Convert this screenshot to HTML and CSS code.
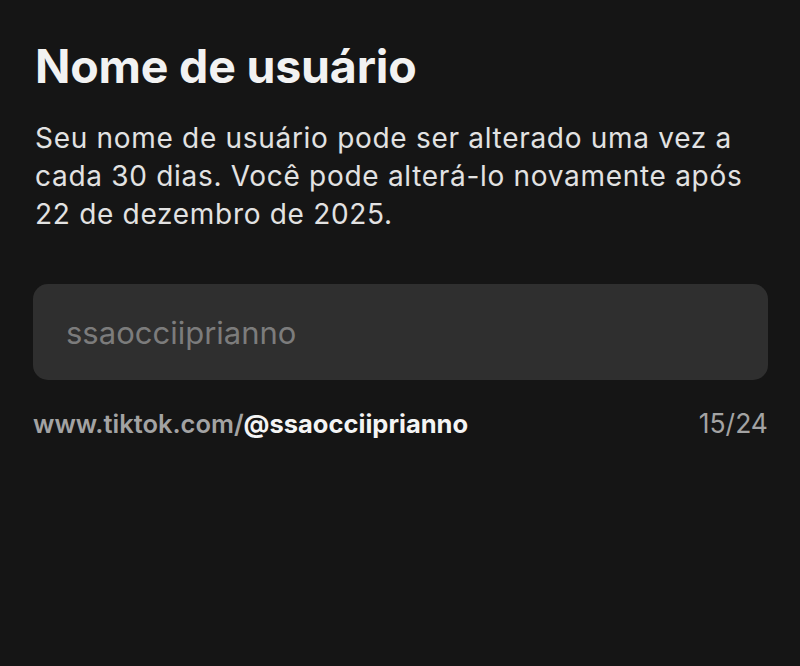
FILE: index.html
```html
<!DOCTYPE html>
<html lang="pt">
<head>
<meta charset="utf-8">
<link rel="stylesheet" href="styles.css">
</head>
<body>
<main class="page">
  <h1 class="title">Nome de usuário</h1>
  <p class="desc">Seu nome de usuário pode ser alterado uma vez a cada 30 dias. Você pode alterá-lo novamente após 22 de dezembro de 2025.</p>
  <div class="field"><span class="placeholder">ssaocciiprianno</span></div>
  <div class="meta">
    <span class="url">www.tiktok.com/<b class="handle">@ssaocciiprianno</b></span>
    <span class="count">15/24</span>
  </div>
</main>
</body>
</html>
```
FILE: styles.css
```css
html, body {
  margin: 0;
  padding: 0;
  background: #151515;
  height: 100%;
}
.page {
  padding: 38px 32px 0 33px;
  font-family: Inter, Roboto, "Liberation Sans", sans-serif;
  color: #f2f2f2;
}
.title {
  margin: 0 0 0 2px;
  font-weight: 700;
  font-size: 46.5px;
  line-height: 56px;
  letter-spacing: -0.2px;
}
.desc {
  margin: 25px 0 0 2px;
  font-size: 28px;
  line-height: 38px;
  letter-spacing: 0.7px;
  color: #e2e2e2;
}
.field {
  margin-top: 51px;
  height: 96px;
  background: #2f2f2f;
  border-radius: 15px;
  display: flex;
  align-items: center;
  padding-left: 33px;
}
.placeholder {
  font-size: 31px;
  color: #7c7c7c;
}
.meta {
  margin-top: 28px;
  display: flex;
  justify-content: space-between;
  align-items: baseline;
  line-height: 30px;
}
.url {
  font-size: 25.5px;
  color: #a3a3a3;
  font-weight: 600;
}
.handle {
  color: #f4f4f4;
  font-weight: 700;
}
.count {
  font-size: 26.5px;
  color: #a3a3a3;
}
```
